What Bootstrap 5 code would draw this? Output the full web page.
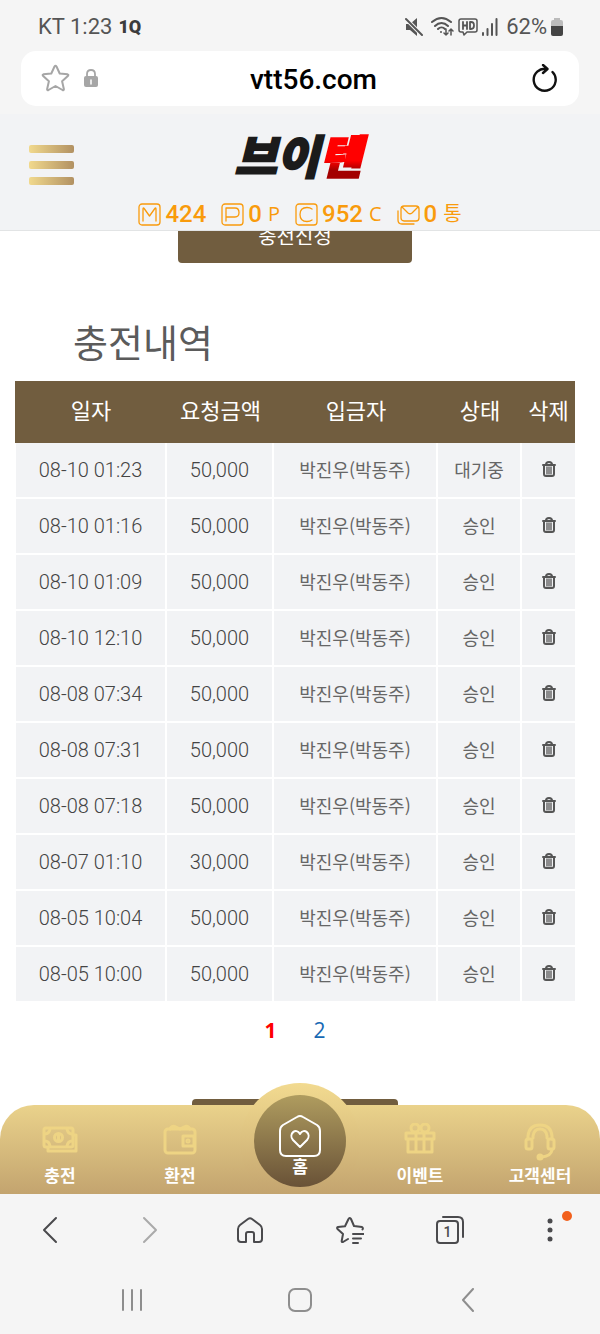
<!DOCTYPE html>
<html lang="ko">
<head>
<meta charset="utf-8">
<meta name="viewport" content="width=device-width, initial-scale=1">
<title>충전내역</title>
<link href="https://cdn.jsdelivr.net/npm/bootstrap@5.3.0/dist/css/bootstrap.min.css" rel="stylesheet">
<style>
:root { --brown: #715d3f; --panel: #f2f3f5; --chrome: #f5f5f5; --orange: #f99b0c; }
body { font-family: Roboto, "Noto Sans CJK KR", sans-serif; background: var(--chrome); color: #666; }
svg { display: block; fill: none; stroke: currentColor; stroke-linecap: round; stroke-linejoin: round; }
.plain { border: 0; background: none; padding: 0; color: inherit; }
.screen { height: 100vh; min-height: 700px; }

.status { height: 51px; padding: 3px 37px 0 38px; font-size: 22px; line-height: 24px; color: #555; }
.carrier-mark { font-size: 18px; font-weight: 900; color: #3c3c3c; margin-left: 6px; }
.address { height: 55px; margin: 0 21px; padding: 0 22px 0 20px; border-radius: 15px; background: #fff; }
.address input { font-size: 28px; font-weight: 500; line-height: 36px; color: #000; text-align: center; min-width: 0; outline: 0; margin: 2px 12px 0 0; }
.address .marks { width: 67px; gap: 14px; color: #a6a6a6; }

.site-head { margin-top: 8px; height: 117px; background: var(--panel); border-bottom: 1px solid #e2e4e5; position: relative; }
.menu-btn { position: absolute; left: 29px; top: 31px; width: 45px; gap: 8px; }
.menu-btn span { height: 8px; border-radius: 2px; background: linear-gradient(90deg, #f1d98d, #b29162); }
.logo { font: italic 900 46px/56px "Noto Sans CJK KR", sans-serif; -webkit-text-stroke: 2px #1b1b1b; color: #1b1b1b; text-decoration: none; margin: 12px -12px 0 0; }
.logo span { background: linear-gradient(#f00 60%, #a30000 75%); -webkit-background-clip: text; background-clip: text; -webkit-text-stroke: 2px transparent; color: transparent; padding-right: 16px; }
.stats { gap: 15px; color: var(--orange); margin-top: 18px; line-height: 28px; }
.stats li { gap: 4px; }
.stats b { font-size: 24px; font-weight: 500; }
.stats small { font: 20px/28px "Open Sans", "Noto Sans CJK KR", sans-serif; margin-left: 2px; }

.content { padding: 0 25px 0 15px; background: #fff; min-height: 0; }
.btn-brown { flex: none; background: var(--brown); color: #fff; border: 0; border-radius: 4px; font: 20px/30px "Noto Sans CJK KR", sans-serif; }
.btn-apply { width: 234px; height: 54px; margin-top: -22px; }
.btn-next { width: 206px; height: 54px; margin-top: 54px; }
.title { font: 38px/54px "Noto Sans CJK KR", sans-serif; color: #5b5b5b; margin: 51px 0 13px 58px; }
.history { table-layout: fixed; width: 100%; text-align: center; border-collapse: separate; border-spacing: 0; flex: none; }
.history th { height: 62px; background: var(--brown); color: #fff; font: 22px/32px "Noto Sans CJK KR", sans-serif; padding: 0 0 7px; }
.history td { height: 56px; background: var(--panel); border-bottom: 2px solid #fff; border-right: 2px solid #fff; font-size: 20px; line-height: 28px; padding: 0 0 1px; }
.history td:first-child { border-left: 1px solid #fff; }
.history td:last-child { border-right: 0; }
.history .ko { font: 18px/28px "Noto Sans CJK KR", sans-serif; padding-bottom: 3px; }
.history .when { font-weight: 300; color: #444; }
.history svg { margin: 4px auto 0; color: #555; }
.history tr > * { vertical-align: middle; }
.pages { margin-top: 12px; gap: 37px; font: 21px/30px "Open Sans", sans-serif; }
.pages a { color: #1769b4; text-decoration: none; }
.pages .current { color: #f00; font-weight: 700; }

.dock { height: 89px; border-radius: 34px 34px 0 0; background: linear-gradient(#ead28b, #c3a46f); position: relative; flex: none; }
.dock-wrap { background: #fff; flex: none; }
.dock a { color: #eed484; text-decoration: none; padding-top: 18px; position: relative; }
.dock a span { font: bold 17px/24px "Noto Sans CJK KR", sans-serif; color: #fff; margin-top: 8px; }
.dock svg { stroke-width: 3; }
.dock .headset { margin-bottom: -6px; }
.dock .hub { padding-top: 9px; color: #fff; }
.dock .hub svg { stroke-width: 2; z-index: 1; }
.dock .hub span { margin-top: -4px; z-index: 1; }
.ring { position: absolute; inset: -22px 0 0; overflow: hidden; pointer-events: none; }
.ring::before { content: ""; position: absolute; left: calc(50% - 60px); top: 0; width: 120px; height: 120px; border-radius: 50%; background: linear-gradient(#f2da90 0, #e9d089 24px, #c3a46f 111px); }
.ring::after { content: ""; position: absolute; left: calc(50% - 46px); top: 12px; width: 92px; height: 92px; border-radius: 50%; background: linear-gradient(#af9c5f, #695237); }

.browser-bar { height: 71px; color: #4a4a4d; }
.browser-bar svg { stroke-width: 2; }
.notice { position: absolute; left: calc(50% + 12px); top: -7px; width: 10px; height: 10px; border-radius: 50%; background: #f2601c; }
.system-bar { height: 69px; padding: 0 8%; color: #8e8e8e; }
.system-bar svg { stroke-width: 2; }
</style>
</head>
<body>
<div class="screen d-flex flex-column overflow-hidden">
  <div class="status d-flex align-items-center flex-shrink-0">
    <span>KT 1:23</span><span class="carrier-mark">1Q</span>
    <div class="ms-auto d-flex align-items-center">
      <svg class="me-1" width="18" height="20" viewBox="0 0 18 20"><path d="M1 7h4l7-6v18l-7-6H1z" fill="currentColor" stroke="none"/><path d="M1 2l16 16" stroke="#f5f5f5" stroke-width="4"/><path d="M1 2l16 16" stroke-width="2"/></svg>
      <svg class="ms-1" width="23" height="20" viewBox="0 0 23 20" stroke-width="2"><path d="M1 5c6-5 13-5 19 0M4 9c4-4 9-4 13 0M7 12c2-2 5-2 7 0"/><circle cx="10" cy="15" r="1" fill="currentColor" stroke="none"/><path d="M15 12v6m-2-2l2 2 2-2M20 18v-6m-2 2l2-2 2 2" stroke-width="1.5"/></svg>
      <svg class="ms-1" width="20" height="20" viewBox="0 0 20 20"><path d="M3 2h14q2 0 2 2v9q0 2-2 2H9l-3 3-1-3H3q-2 0-2-2V4q0-2 2-2z" stroke-width="1.5"/><path d="M5 5v7M9 5v7M5 8.500h4M12 5v7h1q3 0 3-3.500T13 5z" stroke-width="1.800"/></svg>
      <svg class="ms-1 me-2" width="16" height="20" viewBox="0 0 16 20" stroke-width="2"><path d="M1 16v2M5.500 12v6M10 7v11M14.500 2v16"/></svg>
      <span>62%</span>
      <svg class="ms-1" width="12" height="20" viewBox="0 0 12 20"><g stroke="none"><path d="M3 1h6v2h1q2 0 2 2v5H0V5q0-2 2-2h1z" fill="#bbb"/><path d="M0 9h12v8q0 2-2 2H2q-2 0-2-2z" fill="#444"/></g></svg>
    </div>
  </div>
  <div class="address d-flex align-items-center flex-shrink-0">
    <div class="marks d-flex align-items-center flex-shrink-0">
      <button class="plain" aria-label="즐겨찾기"><svg width="29" height="29" viewBox="0 0 29 29" stroke-width="2"><path d="M13.500 2.500q1-1.500 2 0l3.200 7 7.900.8q1.200.5.500 1.500l-6 5.500 1.800 8q-.2 1.200-1.400.7l-7-4-7 4q-1.200.5-1.400-.7l1.800-8-6-5.500q-.7-1 .5-1.500l7.900-.8z"/></svg></button>
      <svg width="14" height="19" viewBox="0 0 14 19"><path d="M3 8V5q0-4 4-4t4 4v3" stroke-width="1.800"/><rect y="7" width="14" height="11" rx="2" fill="currentColor" stroke="none"/><path d="M7 11v4" stroke="#fff" stroke-width="1.500"/></svg>
    </div>
    <input class="plain flex-grow-1" type="text" value="vtt56.com" aria-label="주소">
    <button class="plain flex-shrink-0" aria-label="새로고침"><svg width="26" height="30" viewBox="0 0 26 30" color="#111" stroke-width="2.400"><path d="M16 5A11 11 0 1 0 21.500 8M12 1l4.500 4-4.500 4"/></svg></button>
  </div>

  <header class="site-head d-flex flex-column align-items-center flex-shrink-0">
    <button class="plain menu-btn d-flex flex-column" aria-label="메뉴"><span class="w-100"></span><span class="w-100"></span><span class="w-100"></span></button>
    <a class="logo" href="#">브이<span>텐</span></a>
    <ul class="stats list-unstyled d-flex mb-0">
      <li class="d-flex align-items-center"><svg width="23" height="23" viewBox="0 0 23 23" stroke-width="1.300"><rect x="1" y="1" width="21" height="21" rx="3"/><path d="M5 18V6q0-2 1.500 0l5 7 5-7Q18 4 18 6v12"/></svg><b>424</b></li>
      <li class="d-flex align-items-center"><svg width="23" height="23" viewBox="0 0 23 23" stroke-width="1.300"><rect x="1" y="1" width="21" height="21" rx="3"/><path d="M5 18V5h9q4 0 4 4.500T14 14H5"/></svg><b>0</b><small>P</small></li>
      <li class="d-flex align-items-center"><svg width="23" height="23" viewBox="0 0 23 23" stroke-width="1.300"><rect x="1" y="1" width="21" height="21" rx="3"/><path d="M17 6q-2-1.500-5-1.500-7 0-7 7t7 7q3 0 5-1.500"/></svg><b>952</b><small>C</small></li>
      <li class="d-flex align-items-center"><svg width="23" height="23" viewBox="0 0 23 23" stroke-width="1.300"><rect x="4" y="3" width="18" height="15" rx="3"/><path d="M5 4l6 6q2 1.500 4 0l6-6M1 8v9q0 4 4 4h12"/></svg><b>0</b><small>통</small></li>
    </ul>
  </header>

  <main class="content d-flex flex-column flex-grow-1 overflow-hidden">
    <button class="btn-brown btn-apply align-self-center">충전신청</button>
    <h1 class="title">충전내역</h1>
    <table class="history">
      <colgroup><col style="width:152px"><col style="width:107px"><col style="width:164px"><col style="width:84px"><col style="width:53px"></colgroup>
      <thead><tr><th>일자</th><th>요청금액</th><th>입금자</th><th>상태</th><th>삭제</th></tr></thead>
      <tbody id="rows"></tbody>
    </table>
    <nav class="pages d-flex justify-content-center" aria-label="페이지"><a class="current" href="#">1</a><a href="#">2</a></nav>
    <button class="btn-brown btn-next align-self-center" aria-label="다음"></button>
  </main>

  <div class="dock-wrap"><nav class="dock row row-cols-5 g-0">
    <a class="col d-flex flex-column align-items-center" href="#"><svg width="36" height="32" viewBox="0 0 36 32"><rect x="2" y="5" width="29" height="19" rx="2"/><path d="M6 25v3h28V12h-3"/><circle cx="16.500" cy="14.500" r="4"/><path d="M3 11q4 0 5-5M25 6q1 5 5 5M3 18q4 0 5 5M25 23q1-5 5-5M16.500 12v5"/></svg><span>충전</span></a>
    <a class="col d-flex flex-column align-items-center" href="#"><svg width="34" height="32" viewBox="0 0 34 32"><rect x="2" y="6" width="30" height="24" rx="3"/><path d="M7 6q2-4 6-2l4 2 4-2q4-2 6 2M20 13h11v10H20z"/><circle cx="25" cy="18" r="1"/></svg><span>환전</span></a>
    <a class="col d-flex flex-column align-items-center hub" href="#"><i class="ring"></i><svg class="position-relative" width="44" height="44" viewBox="0 0 44 44"><path d="M19 3q3-2 6 0l14 8q3 2 3 6v19q0 6-6 6H8q-6 0-6-6V17q0-4 3-6z"/><path d="M22 33l-7-7c-5-6 3-13 7-6 4-7 12 0 7 6z"/></svg><span class="position-relative">홈</span></a>
    <a class="col d-flex flex-column align-items-center" href="#"><svg width="32" height="32" viewBox="0 0 32 32"><path d="M2 10h28v6H2zM4 16v13h24V16M12 11v18M20 11v18"/><circle cx="11" cy="5" r="4"/><circle cx="21" cy="5" r="4"/></svg><span>이벤트</span></a>
    <a class="col d-flex flex-column align-items-center" href="#"><svg width="32" height="38" viewBox="0 0 32 38" class="headset"><path d="M4 16V13q1-11 12-11t12 11v3M9 15v-2q1-7 7-7t7 7v2"/><rect x="2" y="16" width="6" height="10" rx="2"/><rect x="24" y="16" width="6" height="10" rx="2"/><path d="M28 27q-1 6-10 7"/><circle cx="16" cy="34" r="2" fill="currentColor"/></svg><span>고객센터</span></a>
  </nav></div>

  <nav class="browser-bar row row-cols-6 g-0 align-items-center flex-shrink-0">
    <button class="plain col d-flex justify-content-center" aria-label="뒤로"><svg width="18" height="28" viewBox="0 0 18 28"><path d="M15 2L3 14l12 12"/></svg></button>
    <button class="plain col d-flex justify-content-center" aria-label="앞으로"><svg width="18" height="28" viewBox="0 0 18 28" color="#aaa"><path d="M3 2l12 12L3 26"/></svg></button>
    <button class="plain col d-flex justify-content-center" aria-label="홈"><svg width="26" height="28" viewBox="0 0 26 28"><path d="M11 3q2-1.500 4 0l8 6q2 1.500 2 4v10q0 3-3 3h-5v-8q0-2-2-2h-4q-2 0-2 2v8H4q-3 0-3-3V13q0-2.500 2-4z"/></svg></button>
    <button class="plain col d-flex justify-content-center" aria-label="북마크"><svg width="28" height="28" viewBox="0 0 28 28"><path d="M12 23l-5 3q-1.500.5-1.300-1l1.300-7-5.500-5q-1-1.500.5-2l7-.8 3.500-7.200q1.500-2 2.500 0L18 10l8 1q1.500 1 .5 2.500M17 18h10.500M17 22.500h8M17 27h5"/></svg></button>
    <button class="plain col d-flex justify-content-center" aria-label="탭"><svg width="28" height="28" viewBox="0 0 28 28"><rect x="1" y="5" width="21" height="22" rx="3"/><path d="M7 1h15q5 0 5 5v15"/><text x="11.500" y="21" text-anchor="middle" font-size="14" font-weight="500" fill="currentColor" stroke="none">1</text></svg></button>
    <button class="plain col d-flex justify-content-center position-relative" aria-label="더보기"><i class="notice"></i><svg width="6" height="24" viewBox="0 0 6 24"><g fill="currentColor" stroke="none"><circle cx="3" cy="3" r="2.500"/><circle cx="3" cy="12" r="2.500"/><circle cx="3" cy="21" r="2.500"/></g></svg></button>
  </nav>
  <nav class="system-bar row row-cols-3 g-0 align-items-center flex-shrink-0">
    <button class="plain col d-flex justify-content-center" aria-label="최근 앱"><svg width="22" height="24" viewBox="0 0 22 24"><path d="M2 2v20M11 2v20M20 2v20"/></svg></button>
    <button class="plain col d-flex justify-content-center" aria-label="홈 화면"><svg width="24" height="24" viewBox="0 0 24 24"><rect x="1" y="1" width="22" height="22" rx="6"/></svg></button>
    <button class="plain col d-flex justify-content-center" aria-label="이전"><svg width="14" height="24" viewBox="0 0 14 24"><path d="M12 1L2 12l10 11"/></svg></button>
  </nav>
</div>
<script src="https://cdn.jsdelivr.net/npm/bootstrap@5.3.0/dist/js/bootstrap.bundle.min.js"></script>
<script>
const entries = [
  ["08-10 01:23", "50,000", "대기중"], ["08-10 01:16", "50,000", "승인"],
  ["08-10 01:09", "50,000", "승인"], ["08-10 12:10", "50,000", "승인"],
  ["08-08 07:34", "50,000", "승인"], ["08-08 07:31", "50,000", "승인"],
  ["08-08 07:18", "50,000", "승인"], ["08-07 01:10", "30,000", "승인"],
  ["08-05 10:04", "50,000", "승인"], ["08-05 10:00", "50,000", "승인"]
];
const trash = '<svg width="14" height="16" viewBox="0 0 14 16"><path d="M1 4h12M4 3.500Q4 1 7 1t3 2.500M2 4v9q0 2 2 2h6q2 0 2-2V4" stroke-width="2"/><path d="M5 6v7M7 6v7M9 6v7" stroke-width="1.300"/></svg>';
document.getElementById("rows").innerHTML = entries.map(([date, sum, state]) =>
  `<tr><td class="when">${date}</td><td class="when">${sum}</td><td class="ko">박진우(박동주)</td><td class="ko">${state}</td><td><button class="plain" aria-label="삭제">${trash}</button></td></tr>`).join("");
</script>
</body>
</html>
